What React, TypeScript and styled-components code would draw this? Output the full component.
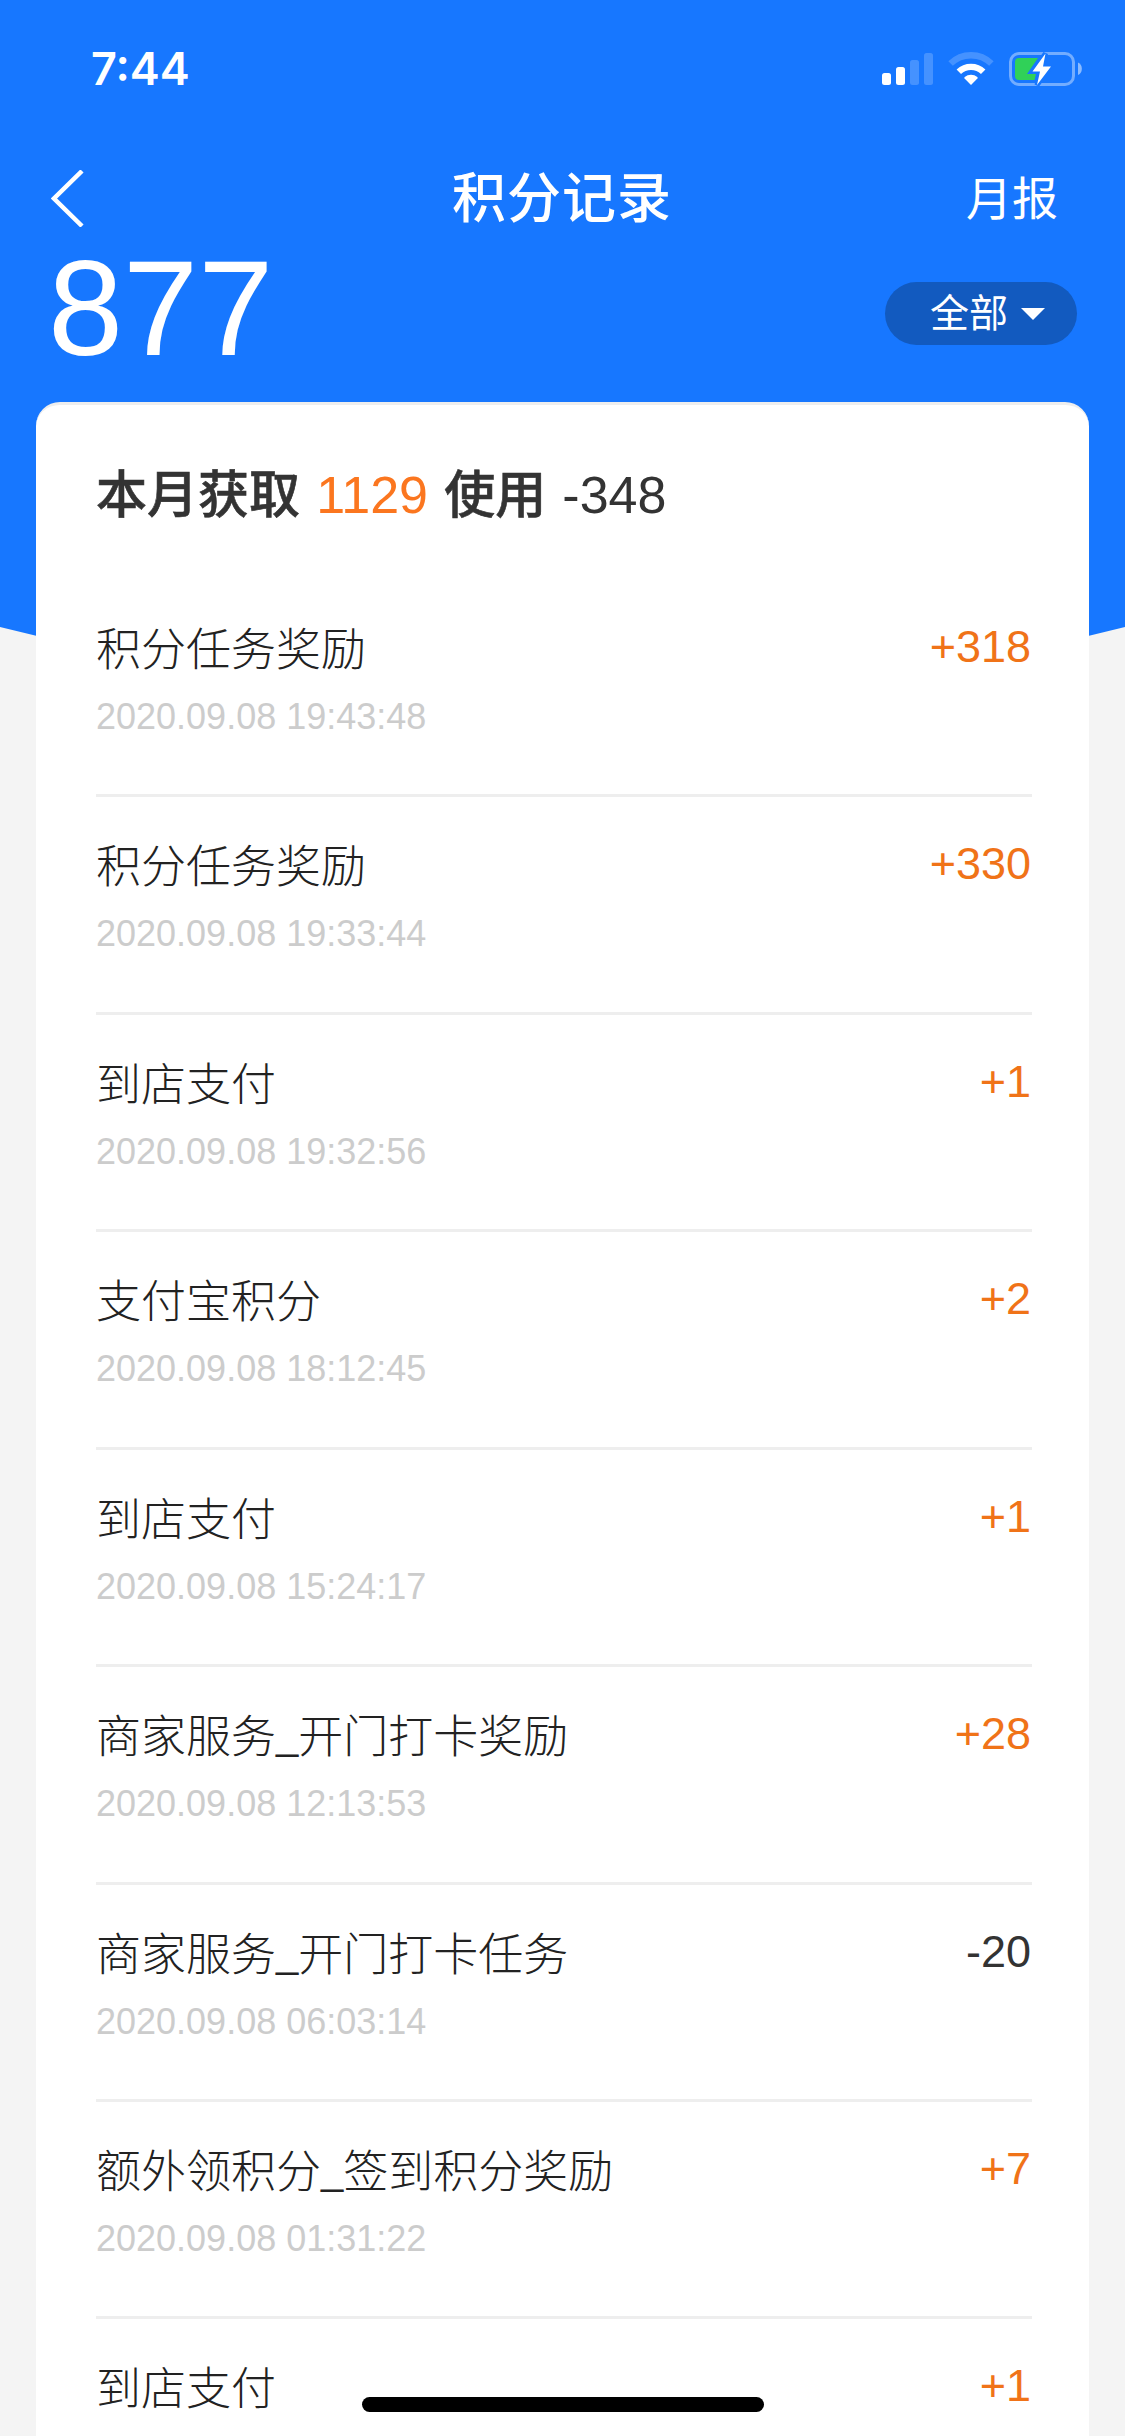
import React from 'react';
import styled, { createGlobalStyle } from 'styled-components';

const GlobalStyle = createGlobalStyle`
  * { box-sizing: border-box; }
  body {
    margin: 0;
    background: #f4f4f4;
    font-family: 'Liberation Sans', 'Noto Sans CJK SC', sans-serif;
  }
`;

const Screen = styled.main`
  position: relative;
  width: 1125px;
  height: 2436px;
  overflow: hidden;
  background: linear-gradient(#1777ff 0 600px, #f4f4f4 600px);
`;

const Curve = styled.svg`
  position: absolute;
  top: 599px;
  left: 0;
`;

const StatusBar = styled.div`
  height: 132px;
  padding: 0 43px 0 91px;
  display: flex;
  align-items: flex-start;
  justify-content: space-between;
`;

const Clock = styled.span`
  margin-top: 42px;
  font: 600 45px/54px Inter, sans-serif;
  color: #fff;
`;

const StatusIcons = styled.svg`
  margin-top: 50px;
  display: block;
`;

const NavBar = styled.header`
  height: 132px;
  padding: 0 67px 0 51px;
  display: grid;
  grid-template-columns: 1fr auto 1fr;
  align-items: center;
  color: #fff;
`;

const Title = styled.h1`
  margin: 2px 0 0 15px;
  font-size: 54px;
  font-weight: 500;
  line-height: 78px;
  letter-spacing: 1px;
`;

const NavLink = styled.span`
  justify-self: end;
  margin-top: 2px;
  font-size: 46px;
  line-height: 66px;
`;

const Balance = styled.section`
  height: 138px;
  padding: 0 48px;
  display: flex;
  align-items: flex-start;
  justify-content: space-between;
  color: #fff;
`;

const Points = styled.strong`
  margin-top: -30px;
  font-size: 135px;
  font-weight: 400;
  line-height: 150px;
`;

const Filter = styled.button`
  width: 192px;
  height: 63px;
  margin-top: 18px;
  padding: 0 32px 0 45px;
  display: flex;
  align-items: center;
  justify-content: space-between;
  border: 0;
  border-radius: 32px;
  background: #125abf;
  color: #fff;
  font: 400 39px/60px 'Liberation Sans', 'Noto Sans CJK SC', sans-serif;
`;

const Card = styled.section`
  position: relative;
  height: 2100px;
  margin: 0 36px;
  padding: 0 57px 0 60px;
  border-top: 3px solid #eee;
  border-radius: 24px 24px 0 0;
  background: #fff;
`;

const Summary = styled.h2`
  margin: 0;
  height: 175px;
  padding: 53px 0 0 0;
  font-size: 51px;
  line-height: 75px;
  font-weight: 500;
  -webkit-text-stroke: 0.6px #333;
  color: #333;
  word-spacing: 2px;
`;

const Figure = styled.span<{ $accent?: boolean }>`
  font-size: 52px;
  font-weight: 400;
  -webkit-text-stroke: 0;
  color: ${(p) => (p.$accent ? '#fb761f' : '#333')};
`;

const Row = styled.article`
  height: 217.43px;
  padding-top: 38px;
  display: flex;
  justify-content: space-between;
  border-bottom: 3px solid #eee;
`;

const RowName = styled.div`
  font-size: 45px;
  font-weight: 300;
  line-height: 66px;
  color: #222;
`;

const Underscore = styled.span`
  font-size: 40px;
  line-height: 0;
  vertical-align: 4px;
`;

const RowTime = styled.time`
  display: block;
  margin-top: 12px;
  font-size: 36px;
  line-height: 42px;
  color: #ccc;
`;

const Amount = styled.span<{ $spent: boolean }>`
  margin: -1px 1px 0 0;
  font-size: 45px;
  line-height: 60px;
  color: ${(p) => (p.$spent ? '#333' : '#f07318')};
`;

const HomeIndicator = styled.div`
  position: absolute;
  left: 362px;
  bottom: 24px;
  width: 402px;
  height: 15px;
  border-radius: 8px;
  background: #000;
`;

const records = [
  { name: '积分任务奖励', time: '2020.09.08 19:43:48', amount: '+318' },
  { name: '积分任务奖励', time: '2020.09.08 19:33:44', amount: '+330' },
  { name: '到店支付', time: '2020.09.08 19:32:56', amount: '+1' },
  { name: '支付宝积分', time: '2020.09.08 18:12:45', amount: '+2' },
  { name: '到店支付', time: '2020.09.08 15:24:17', amount: '+1' },
  { name: '商家服务_开门打卡奖励', time: '2020.09.08 12:13:53', amount: '+28' },
  { name: '商家服务_开门打卡任务', time: '2020.09.08 06:03:14', amount: '-20' },
  { name: '额外领积分_签到积分奖励', time: '2020.09.08 01:31:22', amount: '+7' },
  { name: '到店支付', time: '', amount: '+1' },
];

function RecordName({ name }: { name: string }) {
  const [head, tail] = name.split('_');
  return (
    <RowName>
      {head}
      {tail && <Underscore>_</Underscore>}
      {tail}
    </RowName>
  );
}

export default function App() {
  return (
    <Screen>
      <GlobalStyle />
      <Curve width="1125" height="120" viewBox="0 0 1125 120">
        <path d="M0 0H1125V28Q844 100 562 100T0 28Z" fill="#1777ff" />
      </Curve>
      <StatusBar>
        <Clock>7:44</Clock>
        <StatusIcons width="200" height="38" viewBox="882 50 200 38">
          <g fill="#fff">
            <rect x="882" y="73" width="9" height="12" rx="2.5" />
            <rect x="896" y="67" width="9" height="18" rx="2.5" />
            <rect x="910" y="60" width="9" height="25" rx="2.5" opacity=".2" />
            <rect x="924" y="53" width="9" height="32" rx="2.5" opacity=".2" />
            <path d="M971 85l-6.4-6.6a1 1 0 0 1 .1-1.4a10 10 0 0 1 12.6 0a1 1 0 0 1 .1 1.4z" />
          </g>
          <path d="M958.8 71.8a17.5 17.5 0 0 1 24.4 0" fill="none" stroke="#fff" strokeWidth="6.4" />
          <path d="M950.6 63.6a29 29 0 0 1 40.8 0" fill="none" stroke="#fff" strokeWidth="6.4" opacity=".2" />
          <rect x="1010.5" y="53.5" width="63" height="31" rx="8.5" fill="none" stroke="#fff" strokeWidth="3" opacity=".4" />
          <path d="M1078 62.5a7 7 0 0 1 0 12.5z" fill="#fff" opacity=".5" />
          <path d="M1019 58H1038L1027 74H1036L1034.500 80H1019A4 4 0 0 1 1015 76V62A4 4 0 0 1 1019 58Z" fill="#30d158" />
          <path d="M1045.500 53.500L1032.500 71.500H1040L1037 85L1051 66.500H1043Z" fill="#fff" stroke="#1777ff" strokeWidth="5" paintOrder="stroke" />
        </StatusIcons>
      </StatusBar>
      <NavBar>
        <svg width="33" height="57" viewBox="0 0 33 57" fill="none">
          <path d="M31 1L3 28.5L31 56" stroke="#fff" strokeWidth="4.5" />
        </svg>
        <Title>积分记录</Title>
        <NavLink>月报</NavLink>
      </NavBar>
      <Balance>
        <Points>877</Points>
        <Filter>
          全部
          <svg width="24" height="12" viewBox="0 0 24 12">
            <path d="M0 0H24L12 12Z" fill="#fff" />
          </svg>
        </Filter>
      </Balance>
      <Card>
        <Summary>
          本月获取 <Figure $accent>1129</Figure> 使用 <Figure>-348</Figure>
        </Summary>
        {records.map((record, index) => (
          <Row key={index}>
            <div>
              <RecordName name={record.name} />
              <RowTime>{record.time}</RowTime>
            </div>
            <Amount $spent={record.amount.startsWith('-')}>{record.amount}</Amount>
          </Row>
        ))}
      </Card>
      <HomeIndicator />
    </Screen>
  );
}
